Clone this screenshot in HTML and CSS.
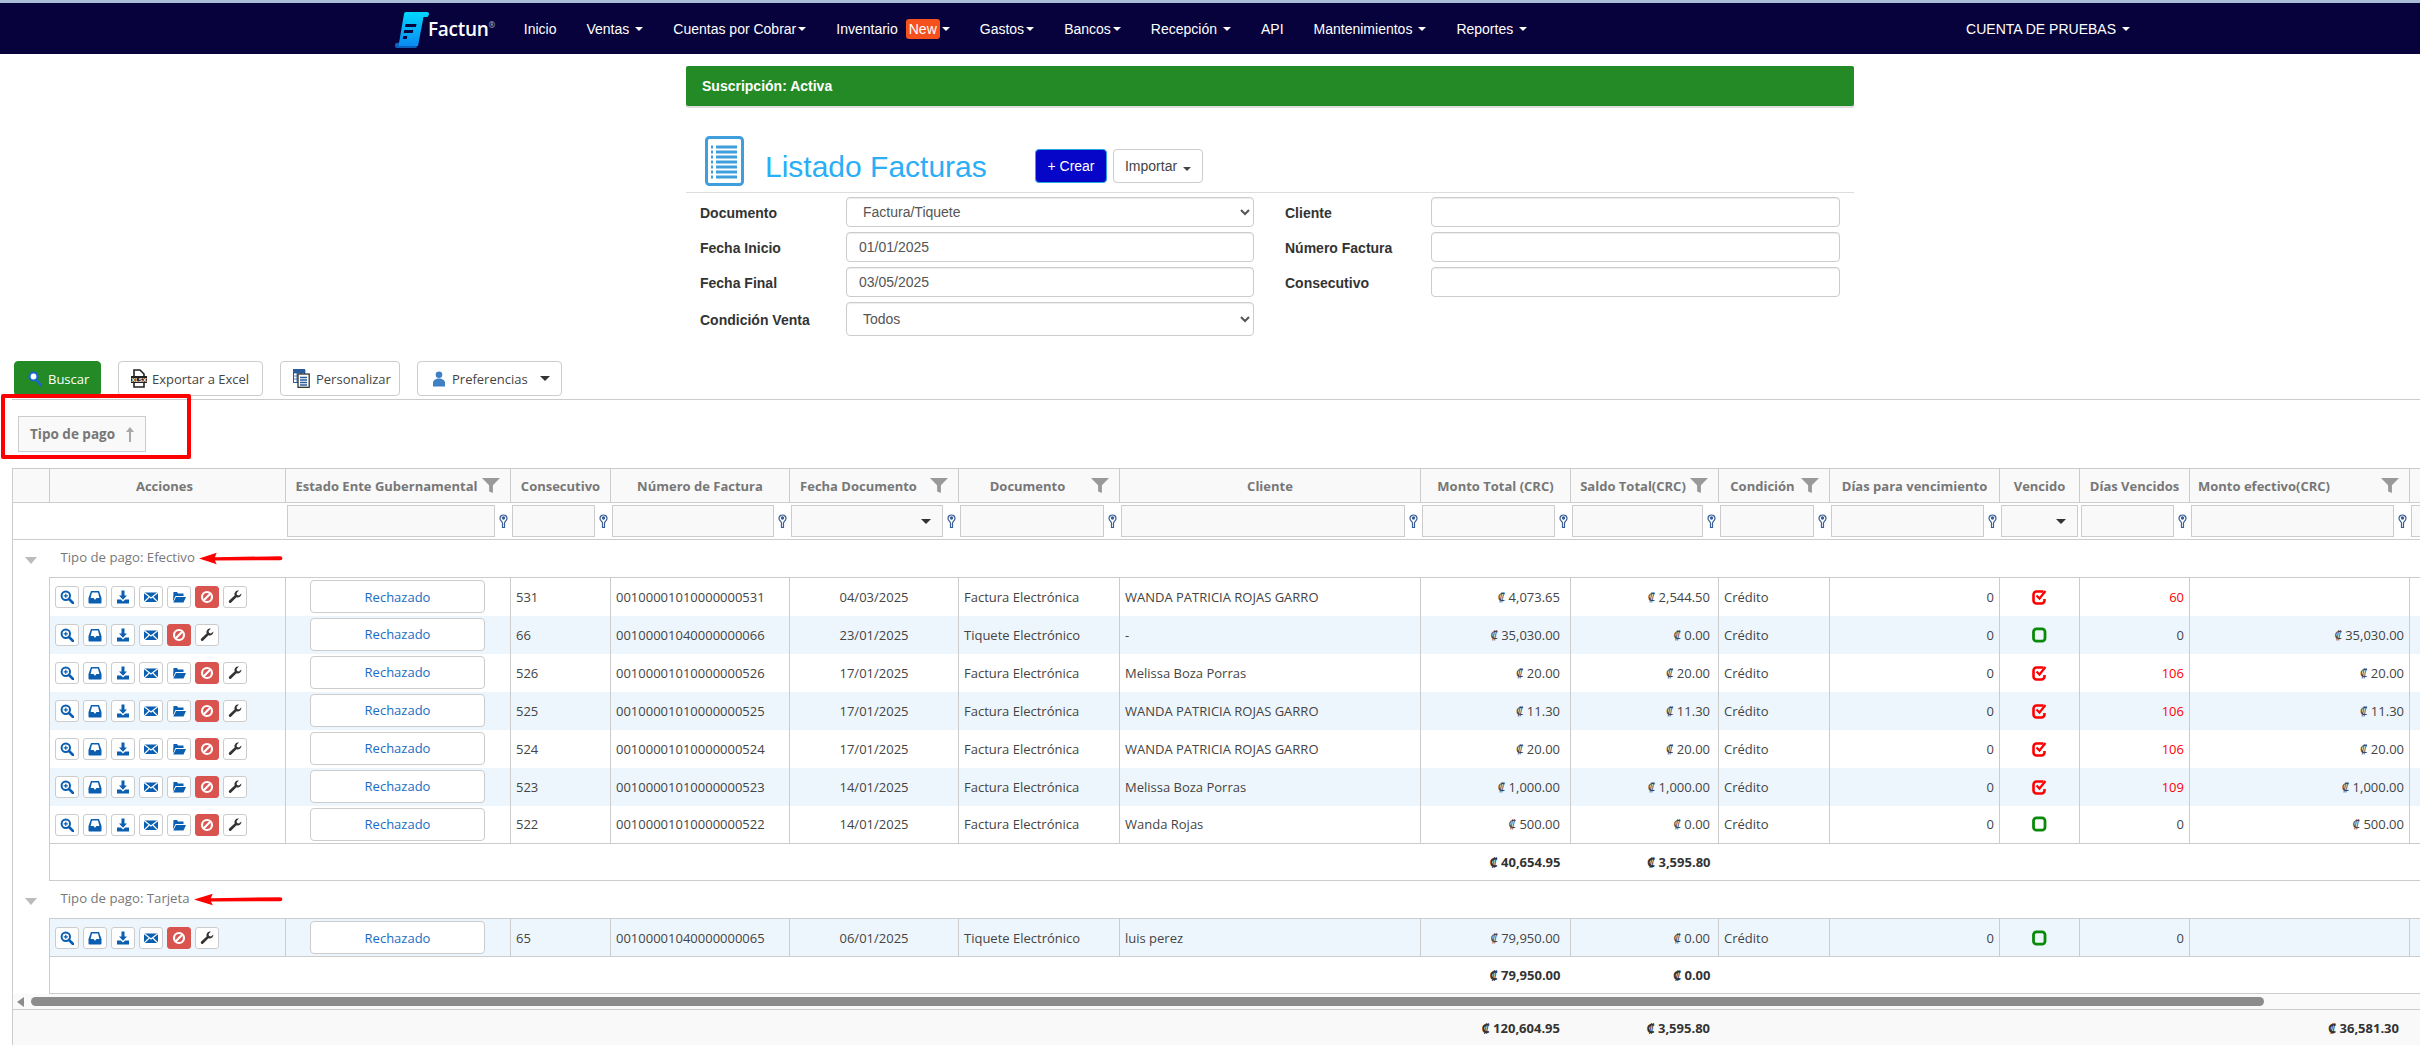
FILE: index.html
```html
<!DOCTYPE html>
<html lang="es">
<head>
<meta charset="utf-8">
<title>Listado Facturas</title>
<link rel="stylesheet" href="styles.css">
</head>
<body>
<svg class="defs" width="0" height="0" aria-hidden="true">
  <defs>
    <linearGradient id="logo-grad" x1="0" y1="0" x2="0" y2="1"><stop offset="0" stop-color="#00d8ff"/><stop offset="1" stop-color="#0a8af0"/></linearGradient>
    <symbol id="i-zoom" viewBox="0 0 14 14"><circle cx="5.8" cy="5.8" r="4.2" fill="none" stroke="currentColor" stroke-width="2"/><path d="M9 9l4 4" stroke="currentColor" stroke-width="2.6" stroke-linecap="round"/><path d="M3.8 5.8h4M5.8 3.8v4" stroke="currentColor" stroke-width="1.2"/></symbol>
    <symbol id="i-inbox" viewBox="0 0 14 14"><path fill="currentColor" fill-rule="evenodd" d="M3 1h8l2.5 7v4.5a1 1 0 0 1-1 1h-11a1 1 0 0 1-1-1V8zM4 2.5L2.6 8h3l1 1.5h.8L8.400 8h3L10 2.500z"/></symbol>
    <symbol id="i-download" viewBox="0 0 14 14"><path fill="currentColor" d="M5.500 .5h3v5h2.500L7 9.800 3 5.500h2.500zM1 9.500h3.800L7 11.500l2.200-2H13v4H1z"/></symbol>
    <symbol id="i-mail" viewBox="0 0 14 14"><path fill="currentColor" d="M0 2.500h14v9.500H0z"/><path d="M0 2.500l7 5.500 7-5.500M0 12l5-4.800M14 12L9 7.200" fill="none" stroke="#fff" stroke-width="1.200"/></symbol>
    <symbol id="i-folder" viewBox="0 0 14 14"><path fill="currentColor" d="M1.500 2h3.500l1 1.500h5.500V6H3.500L1 11.500zM4 7h10l-2.500 5.500H1.300z"/></symbol>
    <symbol id="i-ban" viewBox="0 0 14 14"><circle cx="7" cy="7" r="5" fill="none" stroke="#fff" stroke-width="2.200"/><path d="M3.800 10.200l6.400-6.400" stroke="#fff" stroke-width="2.200"/></symbol>
    <symbol id="i-wrench" viewBox="0 0 14 14"><path fill="currentColor" d="M13.400 3.400a3.700 3.700 0 0 1-4.900 3.800L3.200 12.600a1.400 1.400 0 0 1-2-2l5.400-5.200A3.700 3.700 0 0 1 10.900.6L8.600 2.900l.4 2 2 .5z"/></symbol>
    <symbol id="i-funnel" viewBox="0 0 17 14" preserveAspectRatio="none"><path fill="#999" d="M0 0h17l-6.700 6.800V14l-3.600-1.500V6.800z"/></symbol>
    <symbol id="i-key" viewBox="0 0 9 15"><path fill="#fff" stroke="#3a5f96" stroke-width="1.200" d="M1 4.500a3.500 3.500 0 0 1 7 0C8 6.500 5.500 7.500 5.500 9v4.500h-2V9C3.500 7.500 1 6.500 1 4.500z"/><circle cx="4.500" cy="4" r="1.700" fill="#3a5f96"/></symbol>
    <symbol id="i-overdue" viewBox="0 0 15 16"><path fill="none" stroke="#f00" stroke-width="2.600" stroke-linejoin="round" d="M11.500 2.500H4.500A3 3 0 0 0 1.500 5.500v6A3 3 0 0 0 4.500 14.500h5A3 3 0 0 0 12.500 11.500V10"/><path fill="none" stroke="#f00" stroke-width="2.200" d="M4.500 6.500l3 3L13.500 2"/></symbol>
    <symbol id="i-ok" viewBox="0 0 15 16"><rect x="1.500" y="1.800" width="11.500" height="12.400" rx="3" fill="none" stroke="#0a8a0a" stroke-width="2.800"/></symbol>
    <symbol id="i-arrow" viewBox="0 0 90 16" preserveAspectRatio="none"><path fill="#f00" d="M0 8L19 1l-2 5.500 70-1.300a2.400 2.400 0 0 1 0 4.800L17 10.500 19 15z"/></symbol>
  </defs>
</svg>

<nav class="navbar">
  <a class="logo">
    <svg class="logo-mark" viewBox="0 0 34 36" width="34" height="36">
      <path fill="#0b62bb" d="M0 32.500a2 2 0 0 1 2-1.800h21l-1 3.300a2 2 0 0 1-2 2H2a2 2 0 0 1-2-2z"/>
      <path fill="url(#logo-grad)" d="M9 2a2 2 0 0 1 2-2h21a2 2 0 0 1 2 2.500L32.500 5h-4L23 34H3.500z"/>
      <path fill="#07023b" d="M10.500 12h11l-.6 3h-11zM9.300 18h9l-.6 3h-9zM8.300 24h4l-.6 3h-4z"/>
    </svg>
    <span class="logo-text">Factun<sup class="logo-reg">®</sup></span>
  </a>
  <a class="nav-item">Inicio</a>
  <a class="nav-item">Ventas <i class="caret"></i></a>
  <a class="nav-item nav-tight">Cuentas por Cobrar<i class="caret"></i></a>
  <a class="nav-item nav-tight">Inventario <span class="badge-new">New</span> <i class="caret"></i></a>
  <a class="nav-item nav-tight">Gastos<i class="caret"></i></a>
  <a class="nav-item nav-tight">Bancos<i class="caret"></i></a>
  <a class="nav-item">Recepción <i class="caret"></i></a>
  <a class="nav-item">API</a>
  <a class="nav-item">Mantenimientos <i class="caret"></i></a>
  <a class="nav-item">Reportes <i class="caret"></i></a>
  <a class="nav-item nav-account">CUENTA DE PRUEBAS <i class="caret"></i></a>
</nav>

<main class="center">
  <div class="alert">Suscripción: Activa</div>
  <header class="page-head">
    <svg class="page-icon" viewBox="0 0 39 50" width="39" height="50">
      <rect x="1.500" y="1.500" width="36" height="47" rx="3" fill="#fff" stroke="#3f9fdc" stroke-width="3"/>
      <path d="M11 11h21M11 16h21M11 21h21M11 26h21M11 31h21M11 36h21M11 41h21" stroke="#3f9fdc" stroke-width="3"/>
      <path d="M6 11h2M6 16h2M6 21h2M6 26h2M6 31h2M6 36h2M6 41h2" stroke="#3f9fdc" stroke-width="3"/>
    </svg>
    <h1 class="page-title">Listado Facturas</h1>
    <button class="btn-create">+ Crear</button>
    <button class="btn-import">Importar <i class="caret caret-dark"></i></button>
  </header>
  <form class="filters">
    <label class="f-label">Documento</label>
    <select class="f-input f-select"><option>Factura/Tiquete</option></select>
    <label class="f-label">Cliente</label>
    <input class="f-input" type="text">
    <label class="f-label">Fecha Inicio</label>
    <input class="f-input" type="text" value="01/01/2025">
    <label class="f-label">Número Factura</label>
    <input class="f-input" type="text">
    <label class="f-label">Fecha Final</label>
    <input class="f-input" type="text" value="03/05/2025">
    <label class="f-label">Consecutivo</label>
    <input class="f-input" type="text">
    <label class="f-label">Condición Venta</label>
    <select class="f-input f-select f-tall"><option>Todos</option></select>
  </form>
</main>

<section class="toolbar">
  <button class="tbtn tbtn-green">
    <svg width="14" height="16" viewBox="0 0 14 16"><circle cx="5.500" cy="5.500" r="4" fill="#fff" stroke="#1a66d0" stroke-width="2.200"/><path d="M8.500 9l4 5" stroke="#1a66d0" stroke-width="2.600" stroke-linecap="round"/></svg>
    Buscar
  </button>
  <button class="tbtn tbtn-xls">
    <svg width="16" height="19" viewBox="0 0 16 19"><path d="M3 1h6l4 4v13H3z" fill="#fff" stroke="#222" stroke-width="1.600"/><rect x="0" y="7" width="16" height="7" fill="#222"/><text x="8" y="13" class="xlsx">XLSX</text></svg>
    Exportar a Excel
  </button>
  <button class="tbtn tbtn-cust">
    <svg width="17" height="19" viewBox="0 0 17 19"><rect x=".5" y=".5" width="11" height="13" fill="#fff" stroke="#2a5c9c"/><path d="M0 1h12v3H0zM.5 7h11M.5 10h11M4 4v9M8 4v9" fill="#2a5c9c" stroke="#2a5c9c" stroke-width=".8"/><rect x="5" y="5" width="11.200" height="13.300" fill="#fff" stroke="#222" stroke-width="1.200"/><path d="M7 8.500h7M7 11h7M7 13.500h7M7 16h7" stroke="#2a5c9c" stroke-width="1.300"/></svg>
    Personalizar
  </button>
  <button class="tbtn tbtn-pref">
    <svg width="12" height="16" viewBox="0 0 12 16"><circle cx="6" cy="3.800" r="3.300" fill="#3f7fc4"/><path d="M0 15.500v-3.500c0-3 3-4.500 6-4.500s6 1.500 6 4.500v3.500z" fill="#3f7fc4"/></svg>
    <span>Preferencias</span>
    <i class="caret caret-big"></i>
  </button>
</section>

<section class="group-panel">
  <div class="group-chip">Tipo de pago
    <svg width="10" height="15" viewBox="0 0 10 15"><path d="M5 0L9 5H6v10H4V5H1z" fill="#a8a8a8"/></svg>
  </div>
  <div class="red-box"></div>
</section>

<section class="grid">
  <table class="grid-table">
    <colgroup><col class="c0"><col class="c1"><col class="c2"><col class="c3"><col class="c4"><col class="c5"><col class="c6"><col class="c7"><col class="c8"><col class="c9"><col class="c10"><col class="c11"><col class="c12"><col class="c13"><col class="c14"><col class="c15"></colgroup>
    <thead>
      <tr class="head-row">
        <th></th>
        <th class="th-actions">Acciones</th>
        <th><div class="th-in"><span>Estado Ente Gubernamental</span><svg class="funnel"><use href="#i-funnel"/></svg></div></th>
        <th>Consecutivo</th>
        <th>Número de Factura</th>
        <th><div class="th-in th-date"><span>Fecha Documento</span><svg class="funnel"><use href="#i-funnel"/></svg></div></th>
        <th><div class="th-in"><span>Documento</span><svg class="funnel"><use href="#i-funnel"/></svg></div></th>
        <th>Cliente</th>
        <th>Monto Total (CRC)</th>
        <th><div class="th-in"><span>Saldo Total(CRC)</span><svg class="funnel"><use href="#i-funnel"/></svg></div></th>
        <th><div class="th-in"><span>Condición</span><svg class="funnel"><use href="#i-funnel"/></svg></div></th>
        <th>Días para vencimiento</th>
        <th>Vencido</th>
        <th>Días Vencidos</th>
        <th><div class="th-in th-left"><span>Monto efectivo(CRC)</span><svg class="funnel"><use href="#i-funnel"/></svg></div></th>
        <th></th>
      </tr>
      <tr class="filter-row">
        <td></td><td></td>
        <td><div class="fl"><span class="fl-box"></span><svg class="key"><use href="#i-key"/></svg></div></td>
        <td><div class="fl"><span class="fl-box"></span><svg class="key"><use href="#i-key"/></svg></div></td>
        <td><div class="fl"><span class="fl-box"></span><svg class="key"><use href="#i-key"/></svg></div></td>
        <td><div class="fl"><span class="fl-box fl-drop"><i class="caret caret-big"></i></span><svg class="key"><use href="#i-key"/></svg></div></td>
        <td><div class="fl"><span class="fl-box"></span><svg class="key"><use href="#i-key"/></svg></div></td>
        <td><div class="fl"><span class="fl-box"></span><svg class="key"><use href="#i-key"/></svg></div></td>
        <td><div class="fl"><span class="fl-box"></span><svg class="key"><use href="#i-key"/></svg></div></td>
        <td><div class="fl"><span class="fl-box"></span><svg class="key"><use href="#i-key"/></svg></div></td>
        <td><div class="fl"><span class="fl-box"></span><svg class="key"><use href="#i-key"/></svg></div></td>
        <td><div class="fl"><span class="fl-box"></span><svg class="key"><use href="#i-key"/></svg></div></td>
        <td><div class="fl"><span class="fl-box fl-drop"><i class="caret caret-big"></i></span></div></td>
        <td><div class="fl"><span class="fl-box"></span><svg class="key"><use href="#i-key"/></svg></div></td>
        <td><div class="fl"><span class="fl-box"></span><svg class="key"><use href="#i-key"/></svg></div></td>
        <td><div class="fl"><span class="fl-box"></span></div></td>
      </tr>
    </thead>
    <tbody>
      <tr class="group-row">
        <td class="g-tri"><i class="tri"></i></td>
        <td colspan="15" class="g-text">Tipo de pago: Efectivo<svg class="arrow a1"><use href="#i-arrow"/></svg></td>
      </tr>

      <tr class="row">
        <td class="blank"></td>
        <td class="acts"><div class="act-list"><a class="ab"><svg><use href="#i-zoom"/></svg></a><a class="ab"><svg><use href="#i-inbox"/></svg></a><a class="ab"><svg><use href="#i-download"/></svg></a><a class="ab"><svg><use href="#i-mail"/></svg></a><a class="ab"><svg><use href="#i-folder"/></svg></a><a class="ab ab-red"><svg><use href="#i-ban"/></svg></a><a class="ab ab-dark"><svg><use href="#i-wrench"/></svg></a></div></td>
        <td class="st"><a class="status">Rechazado</a></td>
        <td>531</td><td>00100001010000000531</td><td class="tc">04/03/2025</td><td>Factura Electrónica</td><td>WANDA PATRICIA ROJAS GARRO</td>
        <td class="tr">₡ 4,073.65</td><td class="tr">₡ 2,544.50</td><td>Crédito</td><td class="tr">0</td>
        <td class="tc"><svg class="flag"><use href="#i-overdue"/></svg></td><td class="tr red">60</td><td class="tr"></td><td></td>
      </tr>
      <tr class="row alt">
        <td class="blank"></td>
        <td class="acts"><div class="act-list"><a class="ab"><svg><use href="#i-zoom"/></svg></a><a class="ab"><svg><use href="#i-inbox"/></svg></a><a class="ab"><svg><use href="#i-download"/></svg></a><a class="ab"><svg><use href="#i-mail"/></svg></a><a class="ab ab-red"><svg><use href="#i-ban"/></svg></a><a class="ab ab-dark"><svg><use href="#i-wrench"/></svg></a></div></td>
        <td class="st"><a class="status">Rechazado</a></td>
        <td>66</td><td>00100001040000000066</td><td class="tc">23/01/2025</td><td>Tiquete Electrónico</td><td>-</td>
        <td class="tr">₡ 35,030.00</td><td class="tr">₡ 0.00</td><td>Crédito</td><td class="tr">0</td>
        <td class="tc"><svg class="flag"><use href="#i-ok"/></svg></td><td class="tr">0</td><td class="tr">₡ 35,030.00</td><td></td>
      </tr>
      <tr class="row">
        <td class="blank"></td>
        <td class="acts"><div class="act-list"><a class="ab"><svg><use href="#i-zoom"/></svg></a><a class="ab"><svg><use href="#i-inbox"/></svg></a><a class="ab"><svg><use href="#i-download"/></svg></a><a class="ab"><svg><use href="#i-mail"/></svg></a><a class="ab"><svg><use href="#i-folder"/></svg></a><a class="ab ab-red"><svg><use href="#i-ban"/></svg></a><a class="ab ab-dark"><svg><use href="#i-wrench"/></svg></a></div></td>
        <td class="st"><a class="status">Rechazado</a></td>
        <td>526</td><td>00100001010000000526</td><td class="tc">17/01/2025</td><td>Factura Electrónica</td><td>Melissa Boza Porras</td>
        <td class="tr">₡ 20.00</td><td class="tr">₡ 20.00</td><td>Crédito</td><td class="tr">0</td>
        <td class="tc"><svg class="flag"><use href="#i-overdue"/></svg></td><td class="tr red">106</td><td class="tr">₡ 20.00</td><td></td>
      </tr>
      <tr class="row alt">
        <td class="blank"></td>
        <td class="acts"><div class="act-list"><a class="ab"><svg><use href="#i-zoom"/></svg></a><a class="ab"><svg><use href="#i-inbox"/></svg></a><a class="ab"><svg><use href="#i-download"/></svg></a><a class="ab"><svg><use href="#i-mail"/></svg></a><a class="ab"><svg><use href="#i-folder"/></svg></a><a class="ab ab-red"><svg><use href="#i-ban"/></svg></a><a class="ab ab-dark"><svg><use href="#i-wrench"/></svg></a></div></td>
        <td class="st"><a class="status">Rechazado</a></td>
        <td>525</td><td>00100001010000000525</td><td class="tc">17/01/2025</td><td>Factura Electrónica</td><td>WANDA PATRICIA ROJAS GARRO</td>
        <td class="tr">₡ 11.30</td><td class="tr">₡ 11.30</td><td>Crédito</td><td class="tr">0</td>
        <td class="tc"><svg class="flag"><use href="#i-overdue"/></svg></td><td class="tr red">106</td><td class="tr">₡ 11.30</td><td></td>
      </tr>
      <tr class="row">
        <td class="blank"></td>
        <td class="acts"><div class="act-list"><a class="ab"><svg><use href="#i-zoom"/></svg></a><a class="ab"><svg><use href="#i-inbox"/></svg></a><a class="ab"><svg><use href="#i-download"/></svg></a><a class="ab"><svg><use href="#i-mail"/></svg></a><a class="ab"><svg><use href="#i-folder"/></svg></a><a class="ab ab-red"><svg><use href="#i-ban"/></svg></a><a class="ab ab-dark"><svg><use href="#i-wrench"/></svg></a></div></td>
        <td class="st"><a class="status">Rechazado</a></td>
        <td>524</td><td>00100001010000000524</td><td class="tc">17/01/2025</td><td>Factura Electrónica</td><td>WANDA PATRICIA ROJAS GARRO</td>
        <td class="tr">₡ 20.00</td><td class="tr">₡ 20.00</td><td>Crédito</td><td class="tr">0</td>
        <td class="tc"><svg class="flag"><use href="#i-overdue"/></svg></td><td class="tr red">106</td><td class="tr">₡ 20.00</td><td></td>
      </tr>
      <tr class="row alt">
        <td class="blank"></td>
        <td class="acts"><div class="act-list"><a class="ab"><svg><use href="#i-zoom"/></svg></a><a class="ab"><svg><use href="#i-inbox"/></svg></a><a class="ab"><svg><use href="#i-download"/></svg></a><a class="ab"><svg><use href="#i-mail"/></svg></a><a class="ab"><svg><use href="#i-folder"/></svg></a><a class="ab ab-red"><svg><use href="#i-ban"/></svg></a><a class="ab ab-dark"><svg><use href="#i-wrench"/></svg></a></div></td>
        <td class="st"><a class="status">Rechazado</a></td>
        <td>523</td><td>00100001010000000523</td><td class="tc">14/01/2025</td><td>Factura Electrónica</td><td>Melissa Boza Porras</td>
        <td class="tr">₡ 1,000.00</td><td class="tr">₡ 1,000.00</td><td>Crédito</td><td class="tr">0</td>
        <td class="tc"><svg class="flag"><use href="#i-overdue"/></svg></td><td class="tr red">109</td><td class="tr">₡ 1,000.00</td><td></td>
      </tr>
      <tr class="row">
        <td class="blank"></td>
        <td class="acts"><div class="act-list"><a class="ab"><svg><use href="#i-zoom"/></svg></a><a class="ab"><svg><use href="#i-inbox"/></svg></a><a class="ab"><svg><use href="#i-download"/></svg></a><a class="ab"><svg><use href="#i-mail"/></svg></a><a class="ab"><svg><use href="#i-folder"/></svg></a><a class="ab ab-red"><svg><use href="#i-ban"/></svg></a><a class="ab ab-dark"><svg><use href="#i-wrench"/></svg></a></div></td>
        <td class="st"><a class="status">Rechazado</a></td>
        <td>522</td><td>00100001010000000522</td><td class="tc">14/01/2025</td><td>Factura Electrónica</td><td>Wanda Rojas</td>
        <td class="tr">₡ 500.00</td><td class="tr">₡ 0.00</td><td>Crédito</td><td class="tr">0</td>
        <td class="tc"><svg class="flag"><use href="#i-ok"/></svg></td><td class="tr">0</td><td class="tr">₡ 500.00</td><td></td>
      </tr>
      <tr class="foot-row">
        <td class="blank"></td>
        <td colspan="7" class="foot-first"></td>
        <td class="tr b">₡ 40,654.95</td><td class="tr b b-saldo">₡ 3,595.80</td><td colspan="6"></td>
      </tr>

      <tr class="group-row">
        <td class="g-tri"><i class="tri"></i></td>
        <td colspan="15" class="g-text">Tipo de pago: Tarjeta<svg class="arrow a2"><use href="#i-arrow"/></svg></td>
      </tr>
      <tr class="row alt">
        <td class="blank"></td>
        <td class="acts"><div class="act-list"><a class="ab"><svg><use href="#i-zoom"/></svg></a><a class="ab"><svg><use href="#i-inbox"/></svg></a><a class="ab"><svg><use href="#i-download"/></svg></a><a class="ab"><svg><use href="#i-mail"/></svg></a><a class="ab ab-red"><svg><use href="#i-ban"/></svg></a><a class="ab ab-dark"><svg><use href="#i-wrench"/></svg></a></div></td>
        <td class="st"><a class="status">Rechazado</a></td>
        <td>65</td><td>00100001040000000065</td><td class="tc">06/01/2025</td><td>Tiquete Electrónico</td><td>luis perez</td>
        <td class="tr">₡ 79,950.00</td><td class="tr">₡ 0.00</td><td>Crédito</td><td class="tr">0</td>
        <td class="tc"><svg class="flag"><use href="#i-ok"/></svg></td><td class="tr">0</td><td class="tr"></td><td></td>
      </tr>
      <tr class="foot-row">
        <td class="blank"></td>
        <td colspan="7" class="foot-first"></td>
        <td class="tr b">₡ 79,950.00</td><td class="tr b b-saldo">₡ 0.00</td><td colspan="6"></td>
      </tr>
    </tbody>
  </table>

  <div class="hscroll"><i class="hs-left"></i><div class="hs-thumb"></div></div>

  <table class="grid-table total-table">
    <colgroup><col class="c0"><col class="c1"><col class="c2"><col class="c3"><col class="c4"><col class="c5"><col class="c6"><col class="c7"><col class="c8"><col class="c9"><col class="c10"><col class="c11"><col class="c12"><col class="c13"><col class="c14"><col class="c15"></colgroup>
    <tr class="total-row">
      <td colspan="8"></td>
      <td class="tr b">₡ 120,604.95</td><td class="tr b b-saldo">₡ 3,595.80</td><td colspan="4"></td>
      <td class="tr b">₡ 36,581.30</td><td></td>
    </tr>
  </table>
</section>
</body>
</html>
```

FILE: styles.css
```css
* { box-sizing: border-box; }
html, body { margin: 0; padding: 0; height: 1045px; overflow: hidden; background: #fff; }
body { font-family: "Liberation Sans", Arial, sans-serif; font-size: 14px; color: #333; }
.defs { display: block; height: 0; }
.xlsx { font-family: "Liberation Sans", sans-serif; font-size: 6px; font-weight: 700; fill: #fff; text-anchor: middle; }

/* navbar */
.navbar { display: flex; align-items: center; gap: 30px; height: 54px; padding-left: 395px; padding-right: 290px; background: #07023b; border-top: 3px solid #a9bcd8; color: #fff; }
.logo { display: flex; align-items: center; margin-right: -1px; }
.logo-mark { display: block; flex: none; margin-top: 3px; }
.logo-text { font-family: "Open Sans", sans-serif; font-size: 19px; font-weight: 600; letter-spacing: -.3px; color: #fff; margin-left: -1px; }
.logo-reg { font-size: 8px; color: #aab; vertical-align: 8px; line-height: 0; }
.nav-item { color: #fff; font-size: 14px; white-space: nowrap; display: flex; align-items: center; gap: 4px; }
.nav-tight { gap: 1px; }
.nav-tight .badge-new { margin: 0 0 0 7px; }
.nav-tight .caret { margin-left: 1px; }
.nav-account { margin-left: auto; }
.caret { display: inline-block; width: 0; height: 0; border-left: 4px solid transparent; border-right: 4px solid transparent; border-top: 4px solid currentColor; margin-left: 2px; }
.caret-dark { color: #444; }
.caret-big { border-left-width: 5px; border-right-width: 5px; border-top-width: 5px; color: #333; flex: none; }
.badge-new { background: #f4511e; color: #fff; border-radius: 3px; padding: 3px 3px; line-height: 14px; }

/* center */
.center { width: 1168px; margin: 12px 0 0 686px; }
.alert { height: 40px; display: flex; align-items: center; padding-left: 16px; background: #238a25; color: #fff; font-weight: 700; font-size: 14px; border-radius: 2px; box-shadow: 0 2px 0 #ddd; }
.page-head { display: flex; align-items: flex-start; padding: 30px 0 6px 19px; border-bottom: 1px solid #ddd; height: 87px; }
.page-icon { display: block; flex: none; }
.page-title { margin: 12px 0 0 21px; width: 270px; font-size: 30px; line-height: 38px; font-weight: 400; color: #2aaef5; white-space: nowrap; }
.btn-create { margin-top: 13px; width: 72px; height: 34px; background: #0606c9; color: #fff; border: 1px solid #2aa5e0; border-radius: 4px; font: 14px "Liberation Sans", sans-serif; }
.btn-import { margin: 13px 0 0 6px; width: 90px; height: 34px; background: #fff; color: #444; border: 1px solid #ccc; border-radius: 4px; font: 14px "Liberation Sans", sans-serif; }
.filters { display: grid; grid-template-columns: 146px 408px 177px 409px; row-gap: 5px; padding-left: 14px; margin-top: 4px; align-items: center; }
.f-label { font-weight: 700; font-size: 14px; color: #333; padding-top: 2px; }
.f-label:nth-of-type(even) { padding-left: 31px; }
.f-input { height: 30px; border: 1px solid #ccc; border-radius: 4px; padding: 0 12px; font: 14px "Liberation Sans", sans-serif; color: #555; background: #fff; box-shadow: inset 0 1px 1px rgba(0,0,0,.075); width: 100%; }
.f-select { padding-left: 12px; }
.f-tall { height: 34px; }

/* toolbar */
.toolbar { display: flex; gap: 17px; margin: 25px 0 0 12px; padding: 0 0 3px 2px; border-bottom: 1px solid #ccc; height: 39px; }
.tbtn { display: flex; align-items: center; gap: 6px; height: 35px; padding: 0 14px; background: #fff; border: 1px solid #ccc; border-radius: 4px; font: 13px "Open Sans", sans-serif; color: #444; white-space: nowrap; }
.tbtn svg { flex: none; }
.tbtn-green { width: 87px; padding-left: 13px; background: #238a25; border-color: #238a25; color: #fff; }
.tbtn-xls { width: 145px; padding-left: 12px; gap: 5px; }
.tbtn-cust { width: 120px; padding-left: 12px; }
.tbtn-pref { width: 145px; padding: 0 0 0 15px; gap: 7px; }
.tbtn-pref .caret { margin-left: 5px; }

/* group panel */
.group-panel { position: relative; margin-left: 12px; padding: 16px 6px; height: 68px; }
.group-chip { display: inline-flex; align-items: center; gap: 10px; width: 128px; height: 36px; padding-left: 11px; background: #f9f9f9; border: 1px solid #ccc; font: 700 13.5px "Open Sans", sans-serif; color: #777; }
.red-box { position: absolute; left: -11px; top: -6px; width: 190px; height: 65px; border: 4px solid #f00; border-radius: 2px; pointer-events: none; }

/* grid */
.grid { margin-left: 12px; width: 2408px; overflow: hidden; font-family: "Open Sans", "Noto Sans", "Liberation Sans", sans-serif; font-size: 13px; color: #444; border-left: 1px solid #ccc; }
.grid-table { border-collapse: collapse; table-layout: fixed; width: 2517px; margin-left: -1px; }
.c0 { width: 37px; } .c1 { width: 236px; } .c2 { width: 225px; } .c3 { width: 100px; }
.c4 { width: 179px; } .c5 { width: 169px; } .c6 { width: 161px; } .c7 { width: 301px; }
.c8 { width: 150px; } .c9 { width: 148px; } .c10 { width: 111px; } .c11 { width: 170px; }
.c12 { width: 80px; } .c13 { width: 110px; } .c14 { width: 220px; } .c15 { width: 120px; }
.grid-table td, .grid-table th { padding: 0 5px; white-space: nowrap; overflow: hidden; }
.head-row { height: 34px; background: #f9f9f9; }
.head-row th { border: 1px solid #ccc; font-size: 13px; font-weight: 700; color: #777; text-align: center; }
.grid-table th.th-actions { padding-right: 11px; }
.th-in { display: flex; align-items: center; }
.th-in span { flex: 1; text-align: center; }
.th-date span { padding-right: 8px; }
.th-left span { text-align: left; padding-left: 3px; }
.funnel { width: 18px; height: 15px; flex: none; margin-right: 5px; }
.filter-row { height: 37px; }
.filter-row td { border: 1px solid #ccc; border-width: 0 0 1px; padding: 0 2px 0 1px; }
.fl { display: flex; align-items: center; gap: 4px; }
.fl-box { flex: 1; min-width: 0; height: 32px; background: #f9f9f9; border: 1px solid #ccc; display: flex; align-items: center; justify-content: flex-end; }
.fl-drop { padding-right: 11px; }
.key { width: 9px; height: 15px; flex: none; margin-right: 1px; }
.group-row { height: 38px; }
.group-row td { border: 0; color: #777; }
.g-tri { text-align: center; vertical-align: middle; }
.tri { display: inline-block; width: 0; height: 0; border-left: 6px solid transparent; border-right: 6px solid transparent; border-top: 7px solid #bbb; margin: 6px 0 0 0; }
.g-text { padding-left: 11px !important; padding-bottom: 3px !important; font-size: 13.2px; }
.arrow { width: 84px; height: 13px; margin-left: 4px; vertical-align: middle; }
.a2 { width: 89px; }
.row { height: 38px; }
.row td { border: 1px solid #ccc; border-width: 0 1px; }
.row td.blank { border-left: 0; background: #fff; }
.row.alt { background: #eef6fd; }
.group-row + .row td:not(.blank) { border-top: 1px solid #ccc; }
.row td:nth-child(9) { padding-right: 10px; }
.row td:nth-child(10) { padding-right: 8px; }
.tr { text-align: right; }
.tc { text-align: center; }
.red { color: #f00; }
.b { font-weight: 700; color: #333; }
.grid-table td.b { padding-right: 10px; }
.grid-table td.b-saldo { padding-right: 8px; }
.acts { vertical-align: middle; }
.act-list { display: flex; gap: 4px; margin-top: 1px; }
.ab { display: flex; align-items: center; justify-content: center; width: 24px; height: 22px; background: #fff; border: 1px solid #ccc; border-radius: 3px; color: #0a5fb0; }
.ab svg { width: 14px; height: 14px; display: block; }
.ab-red { background: #d9534f; border-color: #d9534f; }
.ab-dark { color: #333; }
.st { padding-left: 24px !important; vertical-align: top; padding-top: 2px !important; }
.status { display: flex; align-items: center; justify-content: center; width: 175px; height: 33px; background: #fff; border: 1px solid #ccc; border-radius: 4px; color: #1a6cc4; }
.flag { width: 15px; height: 16px; display: block; margin: 0 auto; }
.foot-row { height: 37px; }
.foot-row td { border-top: 1px solid #ccc; border-bottom: 1px solid #ccc; }
.foot-row td.blank { border: 0; }
.foot-first { border-left: 1px solid #ccc; }
.hscroll { display: flex; align-items: center; height: 16px; background: #fafafa; border-bottom: 1px solid #ccc; }
.hs-left { display: block; width: 0; height: 0; margin-left: 4px; border-top: 5px solid transparent; border-bottom: 5px solid transparent; border-right: 7px solid #8c8c8c; }
.hs-thumb { width: 2233px; height: 9px; margin-left: 7px; background: #8c8c8c; border-radius: 5px; }
.total-row { height: 36px; background: #f9f9f9; }
.total-table td { border: 0; }
```
